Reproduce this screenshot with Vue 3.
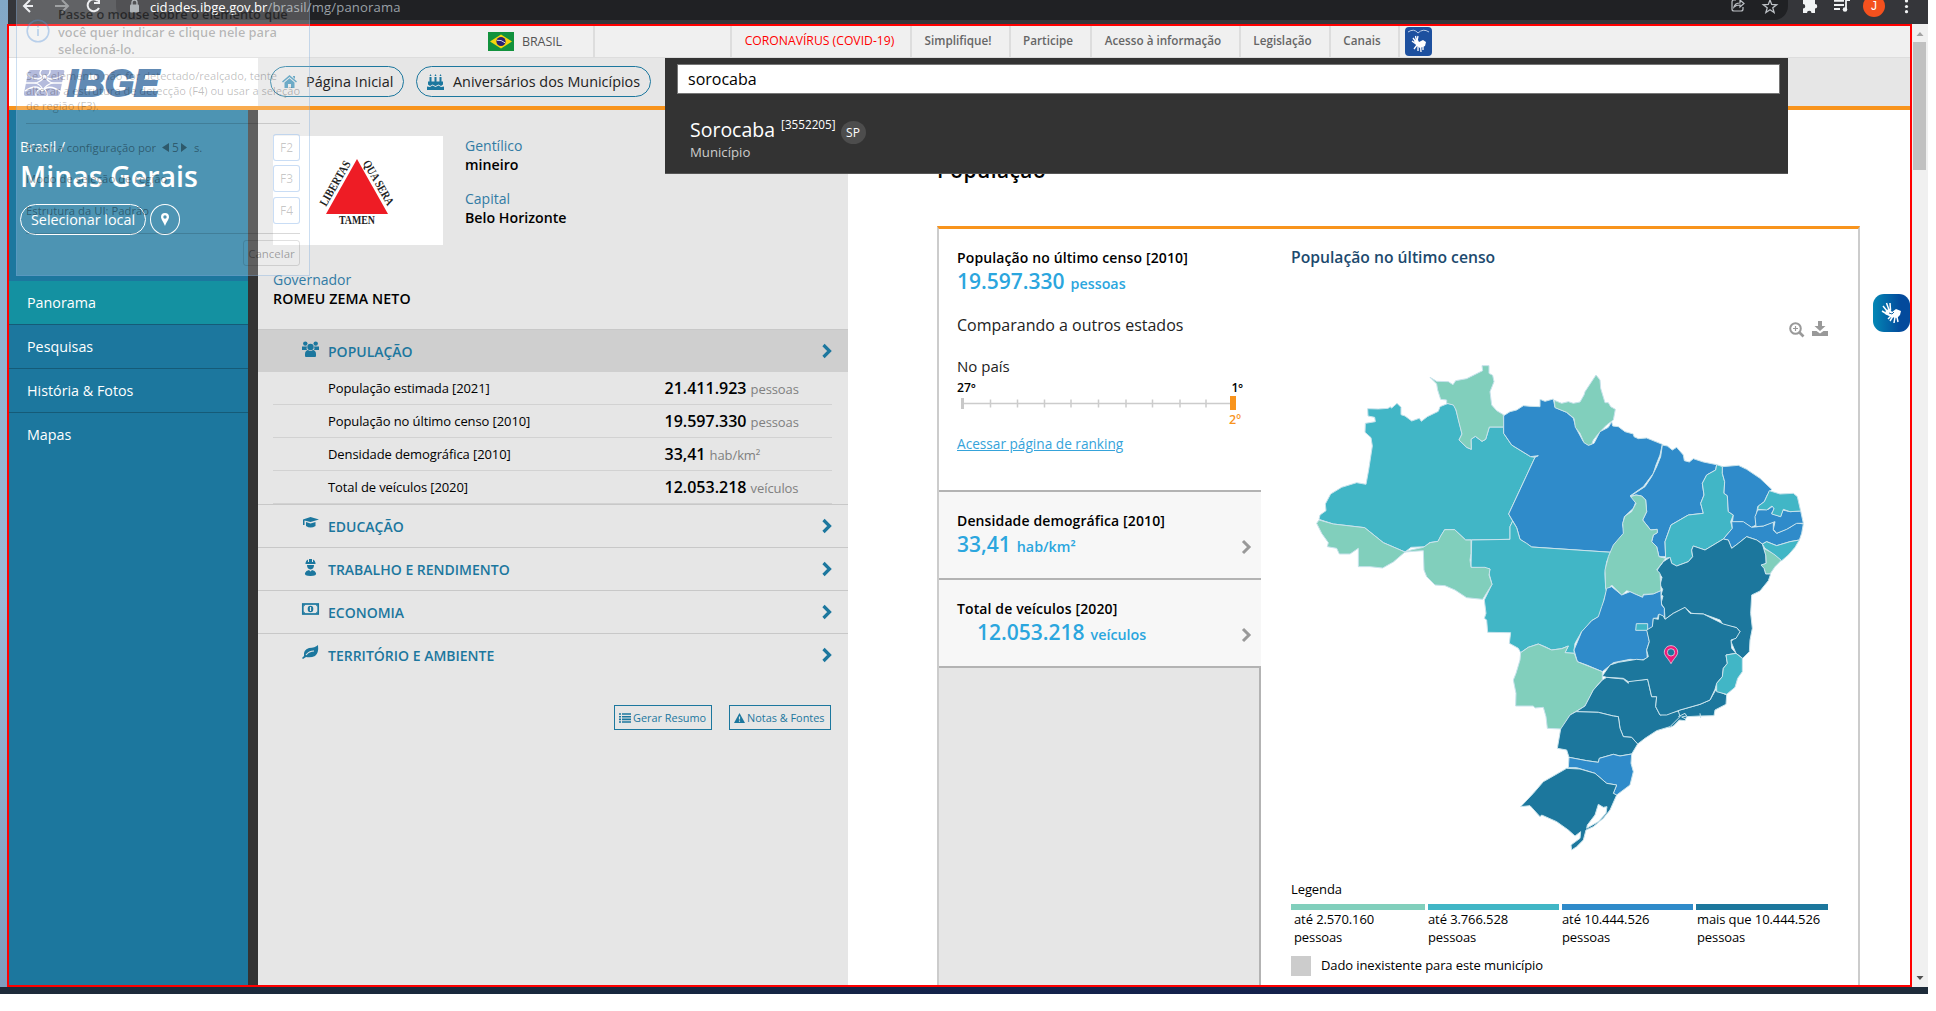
<script setup>
const govLinks = [
  { t: 'CORONAVÍRUS (COVID-19)', w: 180, red: true },
  { t: 'Simplifique!', w: 99 },
  { t: 'Participe', w: 81 },
  { t: 'Acesso à informação', w: 149 },
  { t: 'Legislação', w: 90 },
  { t: 'Canais', w: 69 },
]
const menu = ['Panorama', 'Pesquisas', 'História & Fotos', 'Mapas']
const rows = [
  ['População estimada [2021]', '21.411.923', 'pessoas'],
  ['População no último censo [2010]', '19.597.330', 'pessoas'],
  ['Densidade demográfica [2010]', '33,41', 'hab/km²'],
  ['Total de veículos [2020]', '12.053.218', 'veículos'],
]
const groups = [
  { t: 'EDUCAÇÃO', i: 'edu' },
  { t: 'TRABALHO E RENDIMENTO', i: 'work' },
  { t: 'ECONOMIA', i: 'money' },
  { t: 'TERRITÓRIO E AMBIENTE', i: 'leaf' },
]
const legend = [
  { c: '#81cfbc', w: 134, p: 3, t: 'até 2.570.160' },
  { c: '#41b6c6', w: 131, p: 0, t: 'até 3.766.528' },
  { c: '#2f8bca', w: 131, p: 0, t: 'até 10.444.526' },
  { c: '#1c779d', w: 132, p: 1, t: 'mais que 10.444.526' },
]
const A = '#81cfbc', B = '#41b6c6', C = '#2f8bca', D = '#1c779d'
const north = [
  [B, '233,206 265,207 295,205 300,200 305,204 321,190 333,202 333,224 345,228 365,243 388,235 394,244 412,230 445,214 450,200 475,190 494,196 505,235 516,282 507,300 530,322 544,328 543,298 556,289 576,304 587,298 598,261 641,261 641,280 665,315 722,350 735,352 656,522 668,543 660,560 660,598 527,600 494,569 464,569 444,604 418,608 405,620 363,622 345,636 280,608 224,563 130,552 87,538 90,525 108,512 106,492 122,462 155,442 200,428 228,433 236,390 247,318 243,293 225,277 226,250 256,245 254,232 234,228'],
  [A, '420,112 440,124 475,125 489,134 497,122 530,116 578,92 576,77 597,77 597,100 608,106 612,125 600,155 605,195 620,212 640,224 641,261 598,261 587,298 576,304 556,289 543,298 544,328 530,322 507,300 516,282 505,240 498,210 490,195 470,190 470,180 452,178 443,150 440,132'],
  [C, '641,227 660,215 680,210 700,197 720,199 750,200 750,178 765,184 790,177 795,202 830,217 850,235 860,268 880,305 895,315 912,310 930,275 955,262 965,245 968,258 985,260 1005,275 1030,282 1032,290 1045,296 1070,294 1117,313 1110,345 1098,375 1090,400 1060,440 1020,468 1040,480 1030,505 1003,530 998,555 1003,575 990,610 965,637 725,621 690,598 680,563 656,522 735,352 745,347 722,350 665,315 641,280'],
  [A, '793,181 815,190 835,185 850,190 870,186 882,165 885,155 918,105 930,120 932,145 945,188 955,188 962,200 976,208 970,240 950,255 930,275 910,300 905,313 895,316 882,308 870,280 856,262 852,235 830,217 795,203'],
  [B, '545,600 660,598 660,560 668,543 680,563 690,598 710,610 725,621 965,637 950,665 945,700 947,745 950,755 943,775 935,825 905,842 890,860 875,875 855,910 852,930 853,940 825,938 835,918 815,926 785,930 765,920 745,912 715,922 692,938 685,925 658,910 662,878 593,877 590,840 583,835 588,820 583,780 606,733 597,700 600,687 543,682'],
  [A, '345,636 363,630 400,622 420,608 444,604 452,588 464,569 494,569 527,600 543,600 543,640 540,660 543,682 585,682 600,687 597,705 606,733 578,778 530,773 495,750 465,737 435,735 410,710 402,690 400,632 370,634'],
  [A, '87,540 130,552 224,563 280,608 345,636 310,666 278,684 240,680 205,680 205,625 180,642 148,642 140,625 112,620 115,608 95,580 80,550'],
]
const east = [
  [C, '307,315 322,318 337,330 350,322 370,345 373,362 388,366 400,356 430,366 470,374 467,390 440,405 427,430 432,465 422,490 430,520 385,525 333,555 315,605 317,650 297,650 290,620 275,605 280,585 292,578 290,568 272,570 248,540 260,515 257,480 245,468 228,465 212,468 255,440 275,410 290,380 302,350'],
  [B, '470,374 488,380 487,400 494,425 492,460 502,467 505,515 520,525 512,545 517,565 490,597 435,630 400,618 395,630 398,650 385,665 350,678 335,670 330,652 317,655 315,605 333,555 385,525 430,520 422,490 432,465 427,430 440,405 467,390'],
  [C, '487,380 535,376 560,388 600,415 635,448 622,465 613,485 593,500 590,520 588,555 575,562 545,545 517,548 520,525 505,515 502,467 492,460 494,425 487,400'],
  [C, '515,545 550,545 575,562 610,558 640,545 640,570 650,580 690,562 710,548 730,552 725,580 718,600 690,605 650,617 620,605 607,612 590,600 560,590 535,610 515,625 505,600 490,597 517,565'],
  [C, '593,510 625,508 640,497 642,508 635,520 662,530 668,510 690,515 722,513 730,550 710,550 680,568 650,580 640,568 645,545 610,558 588,560 585,530'],
  [B, '628,452 660,462 700,460 712,470 722,513 690,515 670,508 662,530 635,522 642,506 636,498 620,510 593,508 595,498 613,485'],
  [A, '610,625 640,640 665,660 645,680 630,702 617,702 612,685 603,675 618,670 617,645'],
  [B, '607,612 620,605 650,617 690,605 718,600 705,622 685,645 665,662 645,645 615,625'],
  [D, '330,652 335,670 350,678 385,665 398,650 395,630 400,618 435,630 490,597 505,600 515,625 535,610 560,590 590,600 607,612 617,645 618,670 603,675 612,685 617,702 632,702 625,722 600,753 575,765 572,820 577,865 570,900 568,935 548,955 528,940 513,905 540,875 530,863 490,855 480,840 430,822 395,820 375,803 340,820 315,838 313,805 303,790 309,768 303,765 308,748 300,735 306,712 298,700 290,695 295,685 310,665'],
  [A, '245,468 257,480 260,515 248,540 272,570 292,568 292,578 280,585 275,605 290,620 297,650 317,655 290,690 300,700 303,752 280,762 250,763 248,772 225,762 210,755 200,752 185,765 155,735 143,750 137,745 135,690 145,650 160,615 190,580 188,550 195,528 215,515 228,490 212,470 228,465'],
  [C, '155,740 185,765 210,755 225,762 248,772 250,765 280,762 303,752 303,770 305,795 313,805 313,832 295,824 293,834 280,835 278,865 262,870 268,905 260,930 262,955 245,960 210,958 160,968 127,995 80,975 52,965 42,930 65,875 95,842 115,830 125,800 132,780 140,745'],
  [B, '229,851 263,851 263,871 227,871'],
]
const south = [
  [A, '152,158 175,142 205,132 245,150 275,146 295,138 285,158 313,160 322,185 397,215 397,238 370,270 345,318 300,345 275,387 232,385 228,350 220,322 195,324 190,318 137,318 138,280 130,240 138,220 150,180'],
  [D, '570,345 630,330 690,313 720,300 737,270 770,285 768,313 735,330 732,347 690,348 650,350 645,362 628,360 610,378 600,382 585,380 575,370'],
  [D, '410,232 460,237 475,250 475,243 533,238 545,290 560,290 557,320 570,345 625,333 630,350 600,380 560,392 525,415 503,432 485,412 460,410 450,385 445,350 430,348 385,337 318,335 345,318 370,270 397,240'],
  [D, '585,58 610,40 645,22 660,40 700,42 760,72 800,83 810,95 798,115 783,120 785,145 798,160 768,165 772,190 760,205 757,230 740,250 735,268 720,300 690,313 630,330 590,345 570,345 557,320 560,290 545,290 533,238 475,245 460,235 410,232 397,228 420,195 445,187 500,178 520,180 535,170 530,150 538,125 530,90 547,80 550,55 565,58 567,42 580,48'],
  [B, '768,165 798,160 817,175 817,215 803,235 795,262 770,283 740,275 740,250 757,230 760,205 772,190'],
  [D, '318,335 385,337 430,348 445,350 450,385 460,410 485,412 503,432 485,462 450,468 430,463 388,475 385,487 350,482 297,472 290,450 262,445 272,387 300,345'],
  [C, '297,472 350,482 385,487 388,475 430,463 450,468 485,462 483,490 490,515 480,555 440,585 430,580 440,555 410,550 375,520 320,503 295,503'],
  [D, '290,505 330,507 375,520 410,550 440,555 430,580 440,585 420,630 400,655 370,680 348,690 340,720 320,740 305,750 303,735 330,715 332,695 315,708 295,690 260,665 215,645 210,650 180,617 152,620 190,580 220,545 250,528'],
]
</script>

<template>
  <div class="screen">
    <div class="shell">
      <div class="chrome">
        <div class="omni">
          <svg class="lock" width="10" height="14" viewBox="0 0 10 14"><rect x="0" y="5.5" width="9" height="8" rx="1" fill="#9aa0a6"/><path d="M2 6V3.5a2.5 2.5 0 0 1 5 0V6" fill="none" stroke="#9aa0a6" stroke-width="1.4"/></svg>
          <span class="url">cidades.ibge.gov.br<i>/brasil/mg/panorama</i></span>
        </div>
        <svg class="nav" width="90" height="24" viewBox="0 0 90 24" fill="none" stroke-width="2"><path d="M25 6H16M22 0l-6 6 6 6" stroke="#e8eaed"/><path d="M47 6h13M54 0l6 6-6 6" stroke="#85878a"/><path d="M91 9a6 6 0 1 1-1-7M91-1v5h-5" stroke="#e8eaed" transform="translate(0 -1)"/></svg>
        <svg class="tools" width="210" height="24" viewBox="1728 0 210 24" fill="none">
          <path d="M1736 0h-2a2 2 0 0 0-2 2v7a2 2 0 0 0 2 2h7a2 2 0 0 0 2-2V7M1734 7c1-4 4-4 6-4V0l4 3.500-4 3.500V5c-3 0-4 0-6 2z" stroke="#bdc1c6" stroke-width="1.200"/>
          <path d="M1770 0l1.700 4.500 5 .3-3.900 3 1.300 4.700-4.100-2.700-4.100 2.700 1.300-4.700-3.900-3 5-.3z" stroke="#bdc1c6" stroke-width="1.300"/>
          <path d="M1804 0h4a2 2 0 0 1 4 0h3v4a2.200 2.200 0 0 1 0 4.500V13h-3.500a2.200 2.200 0 0 0-4.500 0h-4V8.500a2.200 2.200 0 0 0 0-4.500V0z" fill="#f1f3f4"/>
          <path d="M1834 .8h10M1834 5h10M1834 9h6M1846 9V0h4" stroke="#f1f3f4" stroke-width="1.800"/><circle cx="1845" cy="9.500" r="2.300" fill="#f1f3f4"/>
          <circle cx="1874" cy="6" r="11" fill="#f4511e"/>
          <g fill="#f1f3f4"><circle cx="1906.500" cy="1" r="1.600"/><circle cx="1906.500" cy="6.500" r="1.600"/><circle cx="1906.500" cy="11.700" r="1.600"/></g>
        </svg>
        <span class="avatar">J</span>
      </div>

      <div class="body">
        <div class="page">
          <div class="gov">
            <div class="brasil">
              <svg width="26" height="19" viewBox="0 0 26 19"><rect width="26" height="19" fill="#12923d"/><path d="M2 9.500L13 2.500l11 7-11 7z" fill="#f6d50e"/><circle cx="13" cy="9.500" r="4.600" fill="#2b2171"/><path d="M9 8.300q4-.8 8 2.500" stroke="#cfd3e8" fill="none"/></svg>
              <span>BRASIL</span>
            </div>
            <div class="govgap"></div>
            <a v-for="g in govLinks" :key="g.t" :class="{ red: g.red }" :style="{ width: g.w + 'px' }">{{ g.t }}</a>
            <svg class="libras" width="27" height="29" viewBox="0 0 27 29"><rect width="27" height="29" rx="4" fill="#1d509f"/><path d="M3 5q6-4 10 1q5-5 11-1" fill="none" stroke="#b9cbe6"/><path d="M8 11l3 4M10.500 9l1 5M13 9l-1 5M7 14l4 3M12 18l6-3M13 18l0 6M15.500 18l.5 7M18 17v6M12 18l-3 4" stroke="#fff" stroke-width="1.300"/><path d="M9 14l4-1 1 2 4-2 3 2-1 4-5 2-4-3z" fill="#fff"/></svg>
          </div>

          <div class="head">
            <div class="logo">
              <svg width="150" height="40" viewBox="20 62 150 40"><path d="M31 70h32q2 0 1 3l-4 20q-.5 3-3 3H26q-2.500 0-2-3l4-20q.7-3 3-3z" fill="#9fa8d2"/><path d="M28 75q10 8 16 0q6 8 19 0M25 91q12-8 17 0q7-8 19 1M42 69q-5 6 2 8M50 69q1 6-5 8M36 97q-1-7 6-9M47 97q1-7-5-9M25 83h11M51 83h12" fill="none" stroke="#fff" stroke-width="1.300"/><path d="M45 76q2 5 7 7-6 2-9 7-2-5-7-7 6-2 9-7z" fill="#9fa8d2" stroke="#fff" stroke-width="1.300"/><text x="67" y="95.500" textLength="92" lengthAdjust="spacingAndGlyphs" font-family="Liberation Sans" font-weight="700" font-style="italic" font-size="36" fill="#356a9f" stroke="#356a9f" stroke-width="1.800">IBGE</text></svg>
            </div>
            <div class="pill p1"><svg width="15" height="13" viewBox="0 0 15 13" fill="#4594b8"><path d="M7.500 0L15 6.500l-1 1L7.500 2 1 7.500l-1-1zM11 1h2v3l-2-2zM7.500 3.200L12.500 7.500V13H9V9H6v4H2.500V7.500z"/></svg><span>Página Inicial</span></div>
            <div class="pill p2"><svg width="17" height="16" viewBox="0 0 17 16" fill="#1c779e"><path d="M2.500 3h2v5h-2zM7.500 3h2v5h-2zM12.500 3h2v5h-2zM3.500 0l1 2h-2zM8.500 0l1 2h-2zM13.500 0l1 2h-2zM1 7.500h15v3l-2 1.500-2.500-1.500L8.500 12 5.500 10.500 3 12 1 10.500zM0 12.500l3 .5 2.500-1.500 3 1.500 3-1.500L14 13l3-.5V16H0z"/></svg><span>Aniversários dos Municípios</span></div>
          </div>

          <div class="cols">
            <aside class="side">
              <div class="place">
                <div class="crumb">Brasil /</div>
                <h1>Minas Gerais</h1>
                <div class="sel"><span class="btn">Selecionar local</span><span class="pin"><svg width="8" height="13" viewBox="0 0 8 13"><path fill-rule="evenodd" d="M4 0a4 4 0 0 1 4 4c0 2-2 4-4 9C2 8 0 6 0 4a4 4 0 0 1 4-4zm0 2.300a1.700 1.700 0 1 0 0 3.400 1.700 1.700 0 0 0 0-3.400z" fill="#fff"/></svg></span></div>
              </div>
              <div v-for="(m, k) in menu" :key="m" class="mi" :class="{ on: k === 0, last: k === 3 }">{{ m }}</div>
            </aside>

            <section class="panel">
              <div class="ident">
                <div class="flag">
                  <svg width="170" height="109" viewBox="0 0 170 109"><path d="M84 23L115 78H53z" fill="#ee1c25"/><g font-family="Liberation Serif" font-weight="700" fill="#222"><text x="66" y="87.500" font-size="12" textLength="36" lengthAdjust="spacingAndGlyphs">TAMEN</text><text transform="translate(53 71) rotate(-60)" font-size="12" textLength="50" lengthAdjust="spacingAndGlyphs">LIBERTAS</text><text transform="translate(89.500 27) rotate(60)" font-size="12" textLength="50" lengthAdjust="spacingAndGlyphs">QUA SERA</text></g></svg>
                </div>
                <div class="facts"><em>Gentílico</em><b>mineiro</b><em class="sec">Capital</em><b>Belo Horizonte</b></div>
              </div>
              <div class="gover"><em>Governador</em><b>ROMEU ZEMA NETO</b></div>
              <div class="acc open">
                <svg class="ic" width="17" height="17" viewBox="0 0 17 17" fill="#1c779e"><circle cx="8.500" cy="6" r="3.200"/><circle cx="3.300" cy="2.600" r="2.200"/><circle cx="13.700" cy="2.600" r="2.200"/><path d="M3 15v-2c0-3 2-4 3-4q2.500 2 5 0c1 0 3 1 3 4v2q0 1-1 1H4q-1 0-1-1zM0 5.500q3 0 5 0-1 2 0 3.500H0zM17 5.500q-3 0-5 0 1 2 0 3.500h5z"/></svg>
                <span>POPULAÇÃO</span><svg class="chev" width="10" height="16" viewBox="0 0 10 16"><path d="M1.500 2L7.500 8l-6 6" fill="none" stroke="#1c779e" stroke-width="3.200"/></svg>
              </div>
              <div v-for="r in rows" :key="r[0]" class="row"><span class="rl">{{ r[0] }}</span><span class="rv">{{ r[1] }} <small>{{ r[2] }}</small></span></div>
              <div v-for="g in groups" :key="g.t" class="acc">
                <svg class="ic" width="17" height="17" viewBox="0 0 17 17" fill="#1c779e">
                  <path v-if="g.i === 'edu'" d="M8.500 1L17 3.500 8.500 6 2.500 4.500v4.500H1V3.500zM4 6l4.500 1.500L13.500 6v4Q8.500 13 4 10z"/>
                  <path v-if="g.i === 'work'" d="M3.500 4q.5-3 2.500-3.500V3h1V0h3v3h1V.5q2 .5 2.500 3.500v1h-10zM5 6h7q0 4-3.500 4.500Q5 10 5 6zM3 14q1-2.500 4-3l1.500 1.500L10 11q3 .5 4 3 1 3-5.500 3T3 14z"/>
                  <g v-if="g.i === 'money'"><rect x=".8" y="2" width="15.400" height="10" fill="none" stroke="#1c779e" stroke-width="1.700"/><ellipse cx="8.500" cy="7" rx="2.800" ry="3.200"/><path d="M8.500 5v4" stroke="#e6e6e6" stroke-width="1.200"/><path d="M1.500 5l2-2.500h-2zM15.500 5l-2-2.500h2zM1.500 9l2 2.500h-2zM15.500 9l-2 2.500h2z"/></g>
                  <g v-if="g.i === 'leaf'"><path d="M16 0q1 8-3 11-4 2-9 1l-3 2-1-1 2-2Q1 5 7 3q6 0 9-3z"/><path d="M4 10q3-4 8-4" stroke="#e6e6e6" fill="none" stroke-width="1.200"/></g>
                </svg>
                <span>{{ g.t }}</span><svg class="chev" width="10" height="16" viewBox="0 0 10 16"><path d="M1.500 2L7.500 8l-6 6" fill="none" stroke="#1c779e" stroke-width="3.200"/></svg>
              </div>
              <div class="acts">
                <span class="b1"><svg width="12" height="10" viewBox="0 0 12 10" stroke="#1c779e" stroke-width="1.600"><path d="M0 1h2M3 1h9M0 3.700h2M3 3.700h9M0 6.400h2M3 6.400h9M0 9h2M3 9h9"/></svg>Gerar Resumo</span>
                <span class="b2"><svg width="11" height="10" viewBox="0 0 11 10"><path d="M5.500 0L11 10H0z" fill="#1c779e"/><path d="M5.500 3.500v3M5.500 7.500v1.300" stroke="#e6e6e6" stroke-width="1.200"/></svg>Notas &amp; Fontes</span>
              </div>
            </section>

            <main class="main">
              <h2>População</h2>
              <div class="card">
                <div class="stats">
                  <div class="st first">
                    <div class="tt">População no último censo [2010]</div>
                    <div class="num">19.597.330 <small>pessoas</small></div>
                    <div class="cmp">Comparando a outros estados</div>
                    <div class="pais">No país</div>
                    <div class="ends"><span>27º</span><span>1º</span></div>
                    <svg class="scale" width="282" height="14" viewBox="0 0 282 14"><path d="M4 7.500h270" stroke="#ccc" stroke-width="1.500"/><path d="M33.500 3.500v8M60.500 3.500v8M87.500 3.500v8M114 3.500v8M141.500 3.500v8M169 3.500v8M195.500 3.500v8M223 3.500v8M249 3.500v8" stroke="#ccc" stroke-width="1.500"/><rect x="4" y="2" width="3" height="11" fill="#c8c8c8"/><rect x="273" width="6" height="14" fill="#f8941d"/></svg>
                    <div class="second">2º</div>
                    <a class="rank">Acessar página de ranking</a>
                  </div>
                  <div class="st"><div class="tt">Densidade demográfica [2010]</div><div class="num">33,41 <small>hab/km²</small><svg width="11" height="16" viewBox="0 0 10 16"><path d="M1.500 2L7.500 8l-6 6" fill="none" stroke="#999" stroke-width="3"/></svg></div></div>
                  <div class="st"><div class="tt">Total de veículos [2020]</div><div class="num ind">12.053.218 <small>veículos</small><svg width="11" height="16" viewBox="0 0 10 16"><path d="M1.500 2L7.500 8l-6 6" fill="none" stroke="#999" stroke-width="3"/></svg></div></div>
                  <div class="rest"></div>
                </div>
                <div class="mapcol">
                  <h3>População no último censo</h3>
                  <div class="mtools">
                    <svg width="16" height="16" viewBox="0 0 16 16" fill="none" stroke="#999"><circle cx="6.500" cy="6.500" r="5.300" stroke-width="2"/><path d="M10.500 10.500l4 4" stroke-width="2.600"/><path d="M4 6.500h5M6.500 4v5" stroke-width="1.200"/></svg>
                    <svg class="dl" width="16" height="15" viewBox="0 0 16 15" fill="#999"><path d="M6 0h4v5h3.500L8 10 2.500 5H6zM0 10h4.500L8 12.500 11.500 10H16v5H0z"/></svg>
                  </div>
                  <svg class="map" width="540" height="530" viewBox="0 0 1620 1590" stroke="#c8e3ec" stroke-width="3" stroke-linejoin="round">
                    <polygon v-for="(s, k) in north" :key="'n' + k" :points="s[1]" :fill="s[0]"/>
                    <g transform="translate(810 0)"><polygon v-for="(s, k) in east" :key="'e' + k" :points="s[1]" :fill="s[0]"/></g>
                    <g transform="translate(540 780)">
                      <polygon v-for="(s, k) in south" :key="'s' + k" :points="s[1]" :fill="s[0]"/>
                      <path d="M385 613l15 9 11-2-3 20-23 25-35 20 2-10 23-30z" fill="#fff"/>
                      <path d="M625 350l20-10 5 8-15 3 12 6M690 340l2 14" fill="none"/>
                      <path fill-rule="evenodd" d="M603 137c12 0 20 9 20 20 0 10-10 16-20 34-10-18-20-24-20-34 0-11 8-20 20-20zm0 9a11 11 0 1 0 0 22 11 11 0 0 0 0-22z" fill="#ee1c78" stroke="#f3c9dc" stroke-width="2.500"/>
                    </g>
                  </svg>
                  <div class="lt">Legenda</div>
                  <div class="legend">
                    <div v-for="l in legend" :key="l.t" :style="{ width: l.w + 'px' }"><i :style="{ background: l.c }"></i><p :style="{ paddingLeft: l.p + 'px' }">{{ l.t }}<br>pessoas</p></div>
                  </div>
                  <div class="nodata"><i></i><span>Dado inexistente para este município</span></div>
                </div>
              </div>
            </main>
          </div>
        </div>
        <div class="scroll"><svg width="16" height="17" viewBox="0 0 16 17"><path d="M4.500 12L8 8l3.500 4z" fill="#a3a3a3"/></svg><div class="thumb"></div><svg class="dn" width="16" height="16" viewBox="0 0 16 16"><path d="M4.500 5h7L8 9z" fill="#505050"/></svg></div>
      </div>
      <div class="task"></div>

      <div class="search">
        <div class="inp">sorocaba</div>
        <div class="res"><span class="rn">Sorocaba</span><span class="code">[3552205]</span><span class="uf">SP</span></div>
        <div class="rt">Município</div>
      </div>

      <div class="vl"><svg width="24" height="24" viewBox="0 0 24 24"><path d="M3 5l4 5M6.500 2l2.500 7M10 2l.5 7M2 10l5 3M8 13l3 1M13 15l-3 5M15 16l-1 6M17 16l1 5M12 14l-4 4" stroke="#fff" stroke-width="1.500"/><path d="M6 9l4-1 2 3 4-3 5 2-1 4-3 3-6-1-6-3z" fill="#fff"/><path d="M9 12l3 1 2-2" stroke="#1767a5" fill="none"/></svg></div>

      <div class="frame"></div>

      <div class="tip">
        <div class="tiphead"><svg width="24" height="24" viewBox="0 0 24 24"><circle cx="12" cy="12" r="10.800" fill="none" stroke="rgba(90,150,220,.38)" stroke-width="1.600"/><path d="M12 10v7M12 6.500v2" stroke="rgba(90,150,220,.4)" stroke-width="1.600"/></svg><p><span class="dk">Passe o mouse sobre o elemento que</span><br>você quer indicar e clique nele para<br>selecioná-lo.</p></div>
        <p class="tt2">Se o elemento não for detectado/realçado, tente<br>alterar a estrutura de detecção (F4) ou usar a seleção<br>de região (F3).</p>
        <div class="opts">
          <div><span>Parar a configuração por &nbsp;<svg width="26" height="9" viewBox="0 0 26 9"><path d="M7 0v9L0 4.500zM19 0v9l6-4.500z" fill="rgba(0,0,0,.4)"/><text x="10" y="9" font-size="12" fill="rgba(0,0,0,.4)">5</text></svg>&nbsp; s.</span><kbd>F2</kbd></div>
          <div><span>Modo de seleção de região</span><kbd>F3</kbd></div>
          <div><span>Estrutura da UI: Padrão</span><kbd>F4</kbd></div>
        </div>
        <div class="cancel">Cancelar</div>
      </div>
    </div>
  </div>
</template>

<style>
body { margin: 0; background: #fff; }
</style>

<style scoped>
* { box-sizing: border-box; }
p, h1, h2, h3 { margin: 0; }
svg { display: block; flex: none; overflow: visible; }
em, i { font-style: normal; }
.screen { width: 1936px; height: 1011px; overflow: hidden; background: #fff; font-family: "Open Sans", "Noto Sans", sans-serif; color: #000; }
.shell { position: relative; width: 1928px; height: 994px; display: flex; flex-direction: column; overflow: hidden; background: linear-gradient(#82a8c6, #9cb9d6 60%, #7d9cbc); }
.chrome { position: relative; height: 24px; margin-left: 8px; background: #35363a; overflow: hidden; padding-left: 108px; flex: none; }
.omni { width: 1672px; height: 20px; background: #202124; border-radius: 0 0 14px 14px; display: flex; align-items: center; padding-left: 14px; }
.lock { margin-top: -9px; }
.url { margin-left: 10px; margin-top: -7px; font-size: 13.100px; color: #fff; line-height: 18px; white-space: nowrap; }
.url i { color: #9aa0a6; letter-spacing: .15px; }
.nav { position: absolute; left: 0; top: 0; }
.tools { position: absolute; left: 1720px; top: 0; }
.avatar { position: absolute; left: 1863px; top: -2px; font: 12px/16px "Liberation Sans", sans-serif; color: #fff; }
.body { height: 963px; display: flex; margin-left: 7px; flex: none; }
.page { width: 1905px; padding-left: 2px; overflow: hidden; background: #fff; display: flex; flex-direction: column; }
.gov { height: 34px; background: #f0f0f0; border-bottom: 1px solid #ddd; display: flex; padding-top: 2px; flex: none; }
.brasil { width: 586px; border-right: 2px solid #ddd; padding: 6px 0 0 479px; display: flex; font-size: 12.5px; line-height: 19px; color: #555; }
.brasil span { margin-left: 8px; letter-spacing: -.1px; }
.govgap { width: 137px; border-right: 2px solid #ddd; }
.gov a { border-right: 2px solid #ddd; text-align: center; padding-right: 5px; font-size: 11.700px; line-height: 29px; color: #666; font-weight: 600; white-space: nowrap; }
.gov a.red { color: #f00; font-size: 12.200px; font-weight: 400; padding-right: 3px; }
.libras { margin: 1px 0 0 5px; }
.head { height: 52px; background: #e6e6e6; border-bottom: 4px solid #f8941d; display: flex; flex: none; }
.logo { width: 249px; background: #fff; padding: 4px 0 0 11px; }
.pill { height: 31px; margin-top: 8px; border: 1px solid #1c779e; border-radius: 16px; display: flex; align-items: center; font-size: 14.400px; color: #222; white-space: nowrap; }
.p1 { width: 134px; margin-left: 12px; padding-left: 11px; }
.p1 span { margin-left: 9px; margin-top: -1px; }
.p2 { width: 235px; margin-left: 12px; padding-left: 10px; }
.p2 span { margin-left: 9px; margin-top: -1px; }
.cols { display: flex; flex: 1; min-height: 0; }
.side { width: 249px; background: #1c779e; border-right: 10px solid #333; color: #fff; }
.place { height: 171px; padding: 25px 0 0 11px; }
.crumb { font-size: 14px; line-height: 24px; }
h1 { font-size: 28.500px; font-weight: 600; line-height: 34px; margin-top: 0; white-space: nowrap; }
.sel { display: flex; margin-top: 11px; gap: 4px; }
.btn { width: 126px; height: 31px; border: 1px solid #fff; border-radius: 16px; text-align: center; font-size: 14.400px; line-height: 30px; white-space: nowrap; }
.pin { width: 30px; height: 31px; border: 1px solid #fff; border-radius: 50%; display: flex; align-items: center; justify-content: center; }
.mi { height: 44px; border-bottom: 1px solid #155b78; padding-left: 18px; font-size: 14.300px; line-height: 44px; }
.mi.on { background: #1491a1; }
.mi.last { border: 0; }
.panel { width: 590px; background: #e6e6e6; }
.ident { display: flex; height: 135px; padding: 26px 0 0 15px; }
.flag { width: 170px; height: 109px; background: #fff; }
.facts { margin-left: 22px; padding-top: 0; }
.facts em, .facts b, .gover em, .gover b { display: block; font-size: 14px; line-height: 19px; }
.panel em { color: #327ba4; }
.facts b, .gover b { font-weight: 600; font-size: 14.200px; }
.facts .sec { margin-top: 15px; }
.gover { height: 84px; padding: 25px 0 0 15px; }
.gover b { letter-spacing: .12px; }
.acc { height: 43px; border-top: 1px solid #c8c8c8; display: flex; align-items: center; padding: 0 16px 0 44px; color: #1c779e; font-size: 14px; font-weight: 600; }
.acc.open { background: #cfcfcf; margin-bottom: 0; }
.acc .ic { margin-top: -3px; }
.acc span { margin-left: 9px; flex: 1; margin-top: 0; }
.row { height: 33px; margin: 0 16px 0 15px; border-bottom: 1px solid #d2d2d2; display: flex; padding-left: 55px; line-height: 32px; font-size: 13px; white-space: nowrap; }
.row .rl { width: 336.500px; letter-spacing: -.1px; }
.rv { font-size: 16px; font-weight: 600; }
.rv small { font-size: 13px; font-weight: 400; color: #808080; letter-spacing: -.1px; }
.acts { display: flex; justify-content: flex-end; gap: 17px; padding: 29px 17px 0 0; }
.acts span { height: 25px; border: 1px solid #1c779e; color: #1c779e; font-size: 10.900px; display: flex; align-items: center; gap: 2px; padding-left: 4px; white-space: nowrap; }
.b1 { width: 98px; }
.b2 { width: 102px; }
.main { flex: 1; padding: 45px 0 0 89px; }
h2 { font-size: 20.800px; font-weight: 600; line-height: 30px; height: 71px; letter-spacing: .5px; }
.card { width: 923px; height: 800px; border: 2px solid #ccc; border-top: 3px solid #f8941d; display: flex; }
.stats { width: 322px; display: flex; flex-direction: column; }
.st { height: 88px; background: #f7f7f7; border-bottom: 2px solid #b3b3b3; padding: 20px 0 0 18px; white-space: nowrap; }
.st.first { height: 263px; background: #fff; padding-top: 20px; }
.tt { font-size: 14px; line-height: 18px; font-weight: 600; letter-spacing: .12px; }
.num { font-size: 21px; line-height: 28px; color: #2ba6de; font-weight: 600; display: flex; align-items: baseline; gap: 6px; }
.num small { font-size: 14.300px; }
.num svg { margin: 2px 9px 0 auto; align-self: center; }
.num.ind { padding-left: 20px; }
.cmp { font-size: 16px; line-height: 22px; margin-top: 16px; color: #222; }
.pais { font-size: 15px; line-height: 22px; margin-top: 19px; color: #222; }
.ends { display: flex; justify-content: space-between; width: 286px; font-size: 12.200px; line-height: 18px; font-weight: 600; margin-top: 2px; }
.scale { margin-top: -1px; }
.second { font-size: 12.500px; line-height: 18px; color: #f8941d; padding-left: 272px; margin-top: 1px; font-weight: 600; }
.rank { display: block; margin-top: 6px; font-size: 13.650px; line-height: 18px; color: #35a3da; text-decoration: underline; }
.rest { flex: 1; background: #e6e6e6; border-right: 2px solid #b3b3b3; }
.mapcol { width: 597px; padding: 16px 0 0 29px; }
h3 { font-size: 15.700px; line-height: 24px; font-weight: 600; color: #1c4a6e; margin-left: 1px; }
.mtools { display: flex; gap: 7px; margin: 53px 0 0 499px; height: 18px; }
.dl { margin-top: -1px; }
.map { height: 530px; }
.lt { font-size: 13px; line-height: 18px; margin: 10px 0 0 1px; letter-spacing: -.1px; }
.legend { display: flex; gap: 3px; margin: 6px 0 0 1px; font-size: 13px; line-height: 18px; white-space: nowrap; }
.legend i { display: block; height: 6px; }
.legend p { letter-spacing: -.1px; }
.nodata { display: flex; align-items: center; margin: 10px 0 0 1px; height: 20px; font-size: 13px; gap: 10px; letter-spacing: -.1px; }
.nodata span { margin-top: -2px; }
.nodata i { width: 20px; height: 20px; background: #ccc; }
.scroll { width: 16px; background: #f0f0f0; display: flex; flex-direction: column; }
.thumb { width: 13px; height: 128px; margin: 1px 0 0 1px; background: #c1c1c1; }
.dn { margin-top: auto; }
.task { height: 7px; background: linear-gradient(90deg, #1e2b3a, #17283d 30%, #13224b 50%, #14214c 68%, #1e2b3a 85%); flex: none; }
.search { position: absolute; left: 665px; top: 58px; width: 1123px; height: 116px; background: #333; border-bottom: 1px solid #555; color: #fff; padding: 6px 8px 0 12px; }
.inp { height: 30px; width: 1103px; background: #fff; border: 1px solid #767676; color: #000; font-size: 16px; line-height: 29px; padding-left: 10px; }
.res { display: flex; margin: 22px 0 0 13px; height: 28px; }
.rn { font-size: 19.500px; line-height: 28px; margin-top: 0; }
.code { font-size: 11.700px; line-height: 17px; margin: 0 5px 0 6px; }
.uf { width: 25px; height: 23px; margin-top: 5px; border-radius: 50%; background: #4d4d4d; text-align: center; font-size: 12px; line-height: 23px; }
.rt { margin: -1px 0 0 13px; color: #ccc; font-size: 13.200px; line-height: 18px; }
.vl { position: absolute; left: 1873px; top: 294px; width: 37px; height: 38px; border-radius: 11px; background: linear-gradient(90deg, #0387b5, #034a9c 75%); padding: 7px 0 0 7px; }
.frame { position: absolute; left: 7px; top: 24px; width: 1905px; height: 963px; border: 2px solid #f00; }
.tip { position: absolute; left: 16px; top: -20px; width: 294px; height: 296px; background: rgba(255,255,255,.22); border: 1px solid rgba(110,160,215,.35); color: rgba(0,0,0,.26); font-size: 12px; padding: 25px 9px 0 9px; font-family: "Open Sans", sans-serif; white-space: nowrap; }
.tiphead { display: flex; font-size: 12.800px; font-weight: 600; line-height: 17.500px; }
.tiphead svg { margin-top: 13px; }
.tiphead p { margin-left: 8px; }
.dk { color: rgba(0,0,0,.55); }
.tt2 { margin-top: 9px; font-size: 11.100px; line-height: 15.400px; padding-bottom: 9px; border-bottom: 1px solid rgba(0,0,0,.15); }
.opts { padding: 10px 0 9px; border-bottom: 1px solid rgba(0,0,0,.15); color: rgba(0,0,0,.4); font-size: 11.300px; display: flex; flex-direction: column; gap: 4.500px; }
.opts div { display: flex; justify-content: space-between; align-items: center; }
.opts span svg { display: inline-block; }
kbd { width: 27px; height: 27px; border: 1px solid rgba(120,170,230,.4); border-radius: 3px; background: rgba(255,255,255,.35); color: rgba(0,0,0,.22); text-align: center; font: 12px/26px "Open Sans", sans-serif; }
.cancel { width: 57px; height: 26px; margin: 6px 0 0 auto; border: 1px solid rgba(0,0,0,.12); border-radius: 3px; text-align: center; line-height: 25px; font-size: 11.500px; color: rgba(0,0,0,.35); }
</style>
